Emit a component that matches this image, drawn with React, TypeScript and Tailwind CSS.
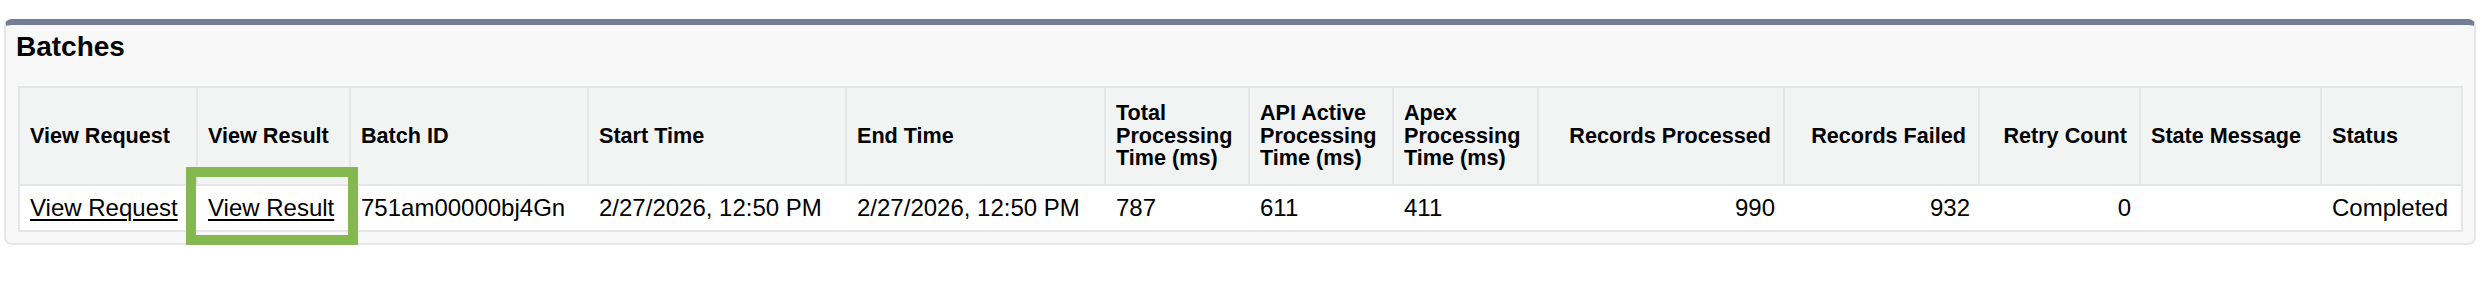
// Batches related list (Salesforce Classic style page block)

import React from 'react';

type Align = 'left' | 'right';

interface Column {
  key: string;
  label: React.ReactNode;
  width: number;
  align: Align;
}

const columns: Column[] = [
  { key: 'request', label: 'View Request', width: 178, align: 'left' },
  { key: 'result', label: 'View Result', width: 153, align: 'left' },
  { key: 'batchId', label: 'Batch ID', width: 238, align: 'left' },
  { key: 'start', label: 'Start Time', width: 258, align: 'left' },
  { key: 'end', label: 'End Time', width: 259, align: 'left' },
  { key: 'total', label: <>Total<br />Processing<br />Time (ms)</>, width: 144, align: 'left' },
  { key: 'api', label: <>API Active<br />Processing<br />Time (ms)</>, width: 144, align: 'left' },
  { key: 'apex', label: <>Apex<br />Processing<br />Time (ms)</>, width: 145, align: 'left' },
  { key: 'processed', label: 'Records Processed', width: 246, align: 'right' },
  { key: 'failed', label: 'Records Failed', width: 195, align: 'right' },
  { key: 'retry', label: 'Retry Count', width: 161, align: 'right' },
  { key: 'message', label: 'State Message', width: 181, align: 'left' },
  { key: 'status', label: 'Status', width: 139, align: 'left' },
];

const row: Record<string, React.ReactNode> = {
  request: <a href="#" className="underline decoration-2 underline-offset-[3px] text-black">View Request</a>,
  result: <a href="#" className="underline decoration-2 underline-offset-[3px] text-black">View Result</a>,
  batchId: '751am00000bj4Gn',
  start: '2/27/2026, 12:50 PM',
  end: '2/27/2026, 12:50 PM',
  total: '787',
  api: '611',
  apex: '411',
  processed: '990',
  failed: '932',
  retry: '0',
  message: '',
  status: 'Completed',
};

const gridCols =
  'grid-cols-[178px_153px_238px_258px_259px_144px_144px_145px_246px_195px_161px_181px_139px]';

export default function App() {
  return (
    <div
      className="min-h-screen bg-white pt-[19px] pl-[4px]"
      style={{ fontFamily: '"Liberation Sans", Arial, Helvetica, sans-serif' }}
    >
      <div className="w-[2472px] rounded-[8px] border-x-2 border-b-2 border-t-[6px] border-x-[#e6e6e6] border-b-[#e6e6e6] border-t-[#737d94] bg-[#f8f8f8] pt-[6px] pb-[11px]">
        <h2 className="pl-[10px] text-[28px] leading-[32px] font-bold text-black">Batches</h2>

        <div className={`mt-[23px] ml-[12px] grid w-fit ${gridCols} border-2 border-[#e3e5e6] bg-white text-black`}>
          {/* Header */}
          {columns.map((col, i) => (
            <div
              key={col.key}
              className={`flex items-center border-b-2 border-[#e3e5e6] bg-[#f2f3f3] py-[14px] text-[21.6px] leading-[22.5px] font-bold ${
                i < columns.length - 1 ? 'border-r-2' : ''
              } ${col.align === 'right' ? 'justify-end pr-[12px] pl-[6px] text-right' : 'pl-[10px] pr-[6px]'}`}
            >
              <span>{col.label}</span>
            </div>
          ))}

          {/* Data row */}
          {columns.map((col) => (
            <div
              key={col.key}
              className={`relative flex h-[44px] items-center text-[24px] leading-[28px] whitespace-nowrap ${
                col.align === 'right' ? 'justify-end pr-[10px]' : 'pl-[10px]'
              }`}
            >
              {row[col.key]}
              {col.key === 'result' && (
                <div className="pointer-events-none absolute -left-[12px] -top-[19px] h-[78px] w-[172px] border-[10px] border-[#86b852]" />
              )}
            </div>
          ))}
        </div>
      </div>
    </div>
  );
}
